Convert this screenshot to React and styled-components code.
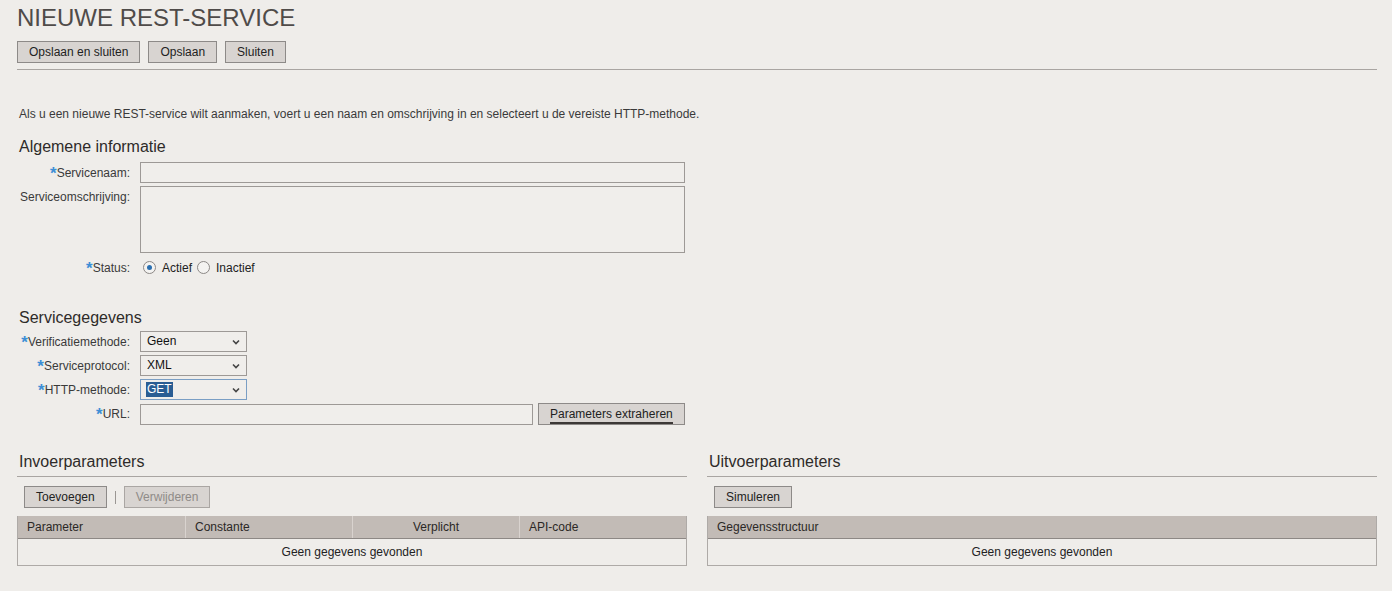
import React from "react";
import styled, { createGlobalStyle } from "styled-components";

const GlobalStyle = createGlobalStyle`
  body {
    margin: 0;
    background: #efedea;
    font-family: "Liberation Sans", Arial, sans-serif;
    font-size: 12px;
    color: #333;
  }
`;

const Page = styled.div`
  width: 1360px;
  padding: 4px 0 0 17px;
`;

const Title = styled.h1`
  margin: 0;
  font-size: 24px;
  line-height: 28px;
  font-weight: normal;
  color: #4f4b49;
`;

const Header = styled.div`
  border-bottom: 1px solid #a9a5a2;
  padding-bottom: 6px;
  margin-top: 9px;
`;

const Toolbar = styled.div`
  display: flex;
  align-items: center;
  gap: 8px;
`;

const Button = styled.button`
  height: 22px;
  padding: 0 ${(p) => p.$pad || 11}px;
  font-family: inherit;
  font-size: 12px;
  color: ${(p) => (p.disabled ? "#8f8b88" : "#222")};
  background: #d8d4d1;
  border: 1px solid ${(p) => (p.disabled ? "#aaa6a3" : "#8d8a88")};
  border-radius: 0;
  cursor: pointer;
`;

const Underlined = styled.span`
  border-bottom: 2px solid #3c3836;
  padding-bottom: 1px;
`;

const Intro = styled.p`
  margin: 36px 0 0 2px;
  line-height: 16px;
  color: #3a3a3a;
`;

const SectionTitle = styled.h2`
  margin: ${(p) => p.$top}px 0 0 2px;
  font-size: 16px;
  line-height: 20px;
  font-weight: normal;
  color: #2e2b29;
`;

const Form = styled.div`
  display: flex;
  flex-direction: column;
  gap: 3px;
  margin-top: ${(p) => p.$top}px;
`;

const Row = styled.div`
  display: grid;
  grid-template-columns: 113px auto;
  column-gap: 10px;
  align-items: start;
  margin-top: ${(p) => p.$top || 0}px;
`;

const Label = styled.label`
  box-sizing: border-box;
  height: 21px;
  padding-top: 2px;
  line-height: 19px;
  text-align: right;
  white-space: nowrap;
  color: #3a3a3a;
`;

const Star = styled.span`
  color: #3d8fd6;
  font-weight: bold;
  font-size: 17px;
  line-height: 10px;
  vertical-align: -2px;
`;

const Field = styled.div`
  display: flex;
  align-items: center;
  gap: 5px;
`;

const Input = styled.div`
  width: ${(p) => p.$w}px;
  height: ${(p) => p.$h || 21}px;
  box-sizing: border-box;
  background: #f0eeeb;
  border: 1px solid #9d9996;
`;

const SelectBox = styled.div`
  width: 107px;
  height: 21px;
  box-sizing: border-box;
  display: flex;
  align-items: center;
  justify-content: space-between;
  padding: 0 6px 0 5px;
  background: #f0eeeb;
  border: 1px solid ${(p) => (p.$focus ? "#7a9ec4" : "#9d9996")};
`;

const SelectValue = styled.span`
  color: ${(p) => (p.$focus ? "#fff" : "#111")};
  background: ${(p) => (p.$focus ? "#2a5d93" : "transparent")};
  line-height: 15px;
  padding: 0 1px;
`;

const RadioGroup = styled.div`
  display: flex;
  align-items: center;
  height: 21px;
  padding-left: 3px;
`;

const Radio = styled.span`
  width: 13px;
  height: 13px;
  box-sizing: border-box;
  border-radius: 50%;
  border: 1px solid #8c8886;
  background: #f4f3f1;
  display: inline-flex;
  align-items: center;
  justify-content: center;
  margin-right: 6px;

  &::after {
    content: "";
    width: 5px;
    height: 5px;
    border-radius: 50%;
    background: ${(p) => (p.$checked ? "#2b6fb0" : "transparent")};
  }
`;

const RadioText = styled.span`
  margin-right: 5px;
  color: #222;
`;

const Panels = styled.div`
  display: grid;
  grid-template-columns: 670px 670px;
  column-gap: 20px;
  margin-top: 27px;
`;

const PanelTitle = styled.h2`
  margin: 0;
  padding: 0 0 4px 2px;
  font-size: 16px;
  line-height: 20px;
  font-weight: normal;
  color: #2e2b29;
  border-bottom: 1px solid #a9a5a2;
`;

const PanelBar = styled.div`
  margin: 9px 0 8px 7px;
  display: flex;
  align-items: center;
  gap: 8px;
`;

const Divider = styled.span`
  width: 1px;
  height: 13px;
  background: #9a9693;
`;

const Table = styled.div`
  border: 1px solid #aeaaa7;
  border-top: none;
`;

const HeadRow = styled.div`
  display: grid;
  grid-template-columns: ${(p) => p.$cols};
  height: 22px;
  background: #c2bbb6;
  border-bottom: 1px solid #8d8885;
`;

const HeadCell = styled.div`
  line-height: 22px;
  padding: 0 9px;
  text-align: ${(p) => p.$align || "left"};
  color: #2b2826;
  border-left: ${(p) => (p.$first ? "none" : "1px solid #d9d3cf")};
`;

const EmptyRow = styled.div`
  height: 26px;
  line-height: 26px;
  text-align: center;
  color: #222;
`;

const required = (text) => (
  <>
    <Star>*</Star>
    {text}
  </>
);

const Chevron = () => (
  <svg width="8" height="6" viewBox="0 0 8 6">
    <path d="M1 1.5 L4 4.5 L7 1.5" fill="none" stroke="#444" strokeWidth="1.6" />
  </svg>
);

const Select = ({ value, focus }) => (
  <SelectBox $focus={focus}>
    <SelectValue $focus={focus}>{value}</SelectValue>
    <Chevron />
  </SelectBox>
);

const App = () => {
  return (
    <Page>
      <GlobalStyle />
      <Title>NIEUWE REST-SERVICE</Title>
      <Header>
        <Toolbar>
          <Button>Opslaan en sluiten</Button>
          <Button>Opslaan</Button>
          <Button>Sluiten</Button>
        </Toolbar>
      </Header>

      <Intro>
        Als u een nieuwe REST-service wilt aanmaken, voert u een naam en omschrijving in en
        selecteert u de vereiste HTTP-methode.
      </Intro>

      <SectionTitle $top={15}>Algemene informatie</SectionTitle>
      <Form $top={5}>
        <Row>
          <Label>{required("Servicenaam:")}</Label>
          <Input $w={545} />
        </Row>
        <Row>
          <Label>Serviceomschrijving:</Label>
          <Input $w={545} $h={67} />
        </Row>
        <Row $top={1}>
          <Label>{required("Status:")}</Label>
          <RadioGroup>
            <Radio $checked />
            <RadioText>Actief</RadioText>
            <Radio />
            <RadioText>Inactief</RadioText>
          </RadioGroup>
        </Row>
      </Form>

      <SectionTitle $top={30}>Servicegegevens</SectionTitle>
      <Form $top={3}>
        <Row>
          <Label>{required("Verificatiemethode:")}</Label>
          <Select value="Geen" />
        </Row>
        <Row>
          <Label>{required("Serviceprotocol:")}</Label>
          <Select value="XML" />
        </Row>
        <Row>
          <Label>{required("HTTP-methode:")}</Label>
          <Select value="GET" focus />
        </Row>
        <Row>
          <Label>{required("URL:")}</Label>
          <Field>
            <Input $w={393} />
            <Button>
              <Underlined>Parameters extraheren</Underlined>
            </Button>
          </Field>
        </Row>
      </Form>

      <Panels>
        <div>
          <PanelTitle>Invoerparameters</PanelTitle>
          <PanelBar>
            <Button>Toevoegen</Button>
            <Divider />
            <Button disabled>Verwijderen</Button>
          </PanelBar>
          <Table>
            <HeadRow $cols="167px 167px 167px 1fr">
              <HeadCell $first>Parameter</HeadCell>
              <HeadCell>Constante</HeadCell>
              <HeadCell $align="center">Verplicht</HeadCell>
              <HeadCell>API-code</HeadCell>
            </HeadRow>
            <EmptyRow>Geen gegevens gevonden</EmptyRow>
          </Table>
        </div>
        <div>
          <PanelTitle>Uitvoerparameters</PanelTitle>
          <PanelBar>
            <Button>Simuleren</Button>
          </PanelBar>
          <Table>
            <HeadRow $cols="1fr">
              <HeadCell $first>Gegevensstructuur</HeadCell>
            </HeadRow>
            <EmptyRow>Geen gegevens gevonden</EmptyRow>
          </Table>
        </div>
      </Panels>
    </Page>
  );
};

export default App;
